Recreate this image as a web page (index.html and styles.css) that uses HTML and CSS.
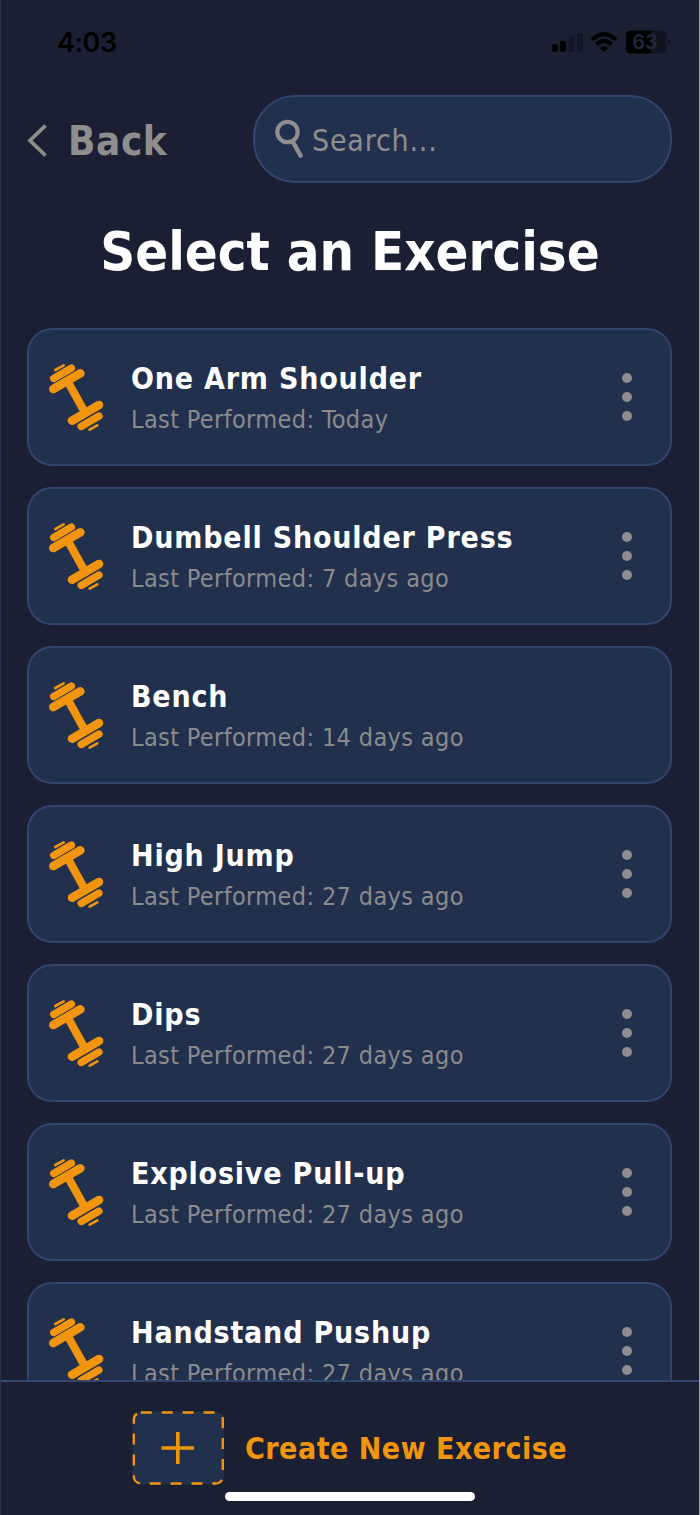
FILE: index.html
```html
<!DOCTYPE html>
<html lang="en">
<head>
    <meta charset="UTF-8">
    <meta name="viewport" content="width=device-width, initial-scale=1.0">
    <title>Select an Exercise</title>
    <link rel="stylesheet" href="styles.css">
</head>
<body>
    <!-- shared dumbbell icon -->
    <svg class="sprite" aria-hidden="true">
        <symbol id="dumbbell" viewBox="0 0 225 270">
            <g fill="none" stroke="currentColor" stroke-linecap="round">
                <path stroke-width="8" d="M46 60L71 46M149 239L172 226"/>
                <path stroke-width="22" d="M41 85.500L94.500 54M123.500 229.500L177 198"/>
                <path stroke-width="26" d="M40 117L121 70M96 212L177 165"/>
                <path stroke-width="24" stroke-linecap="butt" d="M84 96L134 186"/>
            </g>
        </symbol>
    </svg>

    <div class="screen">
        <div class="status-bar">
            <span class="time">4:03</span>
            <svg class="status-icons" width="122" height="26" viewBox="0 0 122 26">
                <rect x="3" y="15" width="6" height="8" rx="2"/>
                <rect x="11" y="12" width="6" height="11" rx="2"/>
                <rect x="19.500" y="7.500" width="6" height="15.500" rx="2" opacity=".3"/>
                <rect x="28" y="4" width="6" height="19" rx="2" opacity=".3"/>
                <g fill="none" stroke="#000" stroke-width="4">
                    <path d="M43 10.500Q55 0 67 10.500"/>
                    <path d="M47.500 15.200Q55 8.500 62.500 15.200"/>
                </g>
                <path d="M51 19Q55 15.500 59 19L55 23Z"/>
                <path d="M82 1.500H102V24.500H82Q77 24.500 77 19.500V6.500Q77 1.500 82 1.500Z"/>
                <path d="M102 1.500H112.500Q117.500 1.500 117.500 6.500V19.500Q117.500 24.500 112.500 24.500H102Z" opacity=".38"/>
                <path d="M119 10Q121.500 10.500 121.500 13T119 16Z" opacity=".4"/>
                <text class="battery-text" x="96" y="20" text-anchor="middle">63</text>
            </svg>
        </div>

        <header class="top-row">
            <a class="back" href="#">
                <svg width="22" height="36" viewBox="0 0 22 36"><path d="M18.500 2.500L3 17.500L18.500 32.500" fill="none" stroke="currentColor" stroke-width="3.800"/></svg>
                <span>Back</span>
            </a>
            <div class="search">
                <svg width="30" height="40" viewBox="0 0 30 40" fill="none" stroke="currentColor">
                    <circle cx="13.500" cy="13" r="10.200" stroke-width="4.200"/>
                    <path d="M19 23L26.500 36.500" stroke-width="4.600" stroke-linecap="round"/>
                </svg>
                <span class="placeholder">Search...</span>
            </div>
        </header>

        <h1>Select an Exercise</h1>

        <main class="exercise-list">
            <div class="card">
                <svg class="dumbbell"><use href="#dumbbell"/></svg>
                <div class="info">
                    <h2>One Arm Shoulder</h2>
                    <p>Last Performed: Today</p>
                </div>
                <div class="menu"><i></i><i></i><i></i></div>
            </div>
            <div class="card">
                <svg class="dumbbell"><use href="#dumbbell"/></svg>
                <div class="info">
                    <h2>Dumbell Shoulder Press</h2>
                    <p>Last Performed: 7 days ago</p>
                </div>
                <div class="menu"><i></i><i></i><i></i></div>
            </div>
            <div class="card">
                <svg class="dumbbell"><use href="#dumbbell"/></svg>
                <div class="info">
                    <h2>Bench</h2>
                    <p>Last Performed: 14 days ago</p>
                </div>
            </div>
            <div class="card">
                <svg class="dumbbell"><use href="#dumbbell"/></svg>
                <div class="info">
                    <h2>High Jump</h2>
                    <p>Last Performed: 27 days ago</p>
                </div>
                <div class="menu"><i></i><i></i><i></i></div>
            </div>
            <div class="card">
                <svg class="dumbbell"><use href="#dumbbell"/></svg>
                <div class="info">
                    <h2>Dips</h2>
                    <p>Last Performed: 27 days ago</p>
                </div>
                <div class="menu"><i></i><i></i><i></i></div>
            </div>
            <div class="card">
                <svg class="dumbbell"><use href="#dumbbell"/></svg>
                <div class="info">
                    <h2>Explosive Pull-up</h2>
                    <p>Last Performed: 27 days ago</p>
                </div>
                <div class="menu"><i></i><i></i><i></i></div>
            </div>
            <div class="card">
                <svg class="dumbbell"><use href="#dumbbell"/></svg>
                <div class="info">
                    <h2>Handstand Pushup</h2>
                    <p>Last Performed: 27 days ago</p>
                </div>
                <div class="menu"><i></i><i></i><i></i></div>
            </div>
        </main>

        <footer>
            <a class="create" href="#">
                <svg width="92" height="74" viewBox="0 0 92 74">
                    <rect class="create-box" x=".5" y=".5" width="91.500" height="73" rx="9"/>
                    <rect class="create-dash" x="1.800" y="1.500" width="89" height="71" rx="7"/>
                    <path class="create-plus" d="M29.500 37H62M45.800 21V53"/>
                </svg>
                <span>Create New Exercise</span>
            </a>
            <div class="home-indicator"></div>
        </footer>
    </div>
</body>
</html>
```
FILE: styles.css
```css
* {
    margin: 0;
    padding: 0;
    box-sizing: border-box;
}

body {
    background: #1a1f34;
    font-family: 'DejaVu Sans Condensed', 'DejaVu Sans', sans-serif;
    font-stretch: condensed;
    color: #fff;
}

a {
    color: inherit;
    text-decoration: none;
}

svg {
    display: block;
    flex-shrink: 0;
}

.sprite {
    display: none;
}

.screen {
    display: flex;
    flex-direction: column;
    height: 1515px;
    border-left: 1px solid #2f3447;
    border-right: 1px solid #a3a5ae;
    overflow: hidden;
}

/* Status bar */
.status-bar {
    display: flex;
    justify-content: space-between;
    align-items: center;
    height: 95px;
    padding: 0 28px 11px 56px;
    color: #000;
}

.time {
    font-family: 'Inter', sans-serif;
    font-size: 27px;
    font-weight: 600;
    letter-spacing: -0.5px;
}

.battery-text {
    font-family: 'Inter', sans-serif;
    font-size: 20px;
    font-weight: 600;
    fill: #20263c;
}

/* Back + search */
.top-row {
    display: flex;
    justify-content: space-between;
    height: 88px;
    padding: 0 27px 0 26px;
    color: #8e8e8e;
}

.back {
    display: flex;
    align-items: center;
    gap: 19px;
    padding-top: 3px;
    font-size: 40px;
    font-weight: bold;
    letter-spacing: 0.6px;
}

.search {
    display: flex;
    align-items: center;
    width: 419px;
    padding-left: 19px;
    background: #21304c;
    border: 2px solid #31456d;
    border-radius: 42px;
}

.placeholder {
    margin-left: 8px;
    padding-top: 3px;
    font-size: 30px;
    letter-spacing: 0.8px;
}

h1 {
    height: 145px;
    padding-top: 37px;
    text-align: center;
    font-size: 54px;
    line-height: 64px;
}

/* Exercise cards */
.exercise-list {
    flex: 1;
    display: flex;
    flex-direction: column;
    gap: 21px;
    min-height: 0;
    padding: 0 27px 0 26px;
    overflow: hidden;
}

.card {
    display: flex;
    align-items: center;
    flex-shrink: 0;
    height: 138px;
    padding: 0 38px 0 11px;
    background: #21304c;
    border: 2px solid #31456d;
    border-radius: 25px;
}

.dumbbell {
    width: 75px;
    height: 90px;
    margin-bottom: 4px;
    color: #f2950e;
}

.info {
    flex: 1;
    margin-left: 16px;
    padding-top: 4px;
}

.info h2 {
    font-size: 30px;
    line-height: 40px;
    letter-spacing: 0.8px;
}

.info p {
    color: #8b8b8b;
    font-size: 25px;
    line-height: 41px;
    letter-spacing: 0.37px;
}

.menu {
    display: flex;
    flex-direction: column;
    gap: 9px;
}

.menu i {
    width: 10px;
    height: 10px;
    background: #8e8e8e;
    border-radius: 50%;
}

/* Bottom bar */
footer {
    height: 135px;
    padding-top: 29px;
    border-top: 2px solid #31456d;
}

.create {
    display: flex;
    align-items: center;
    height: 74px;
    padding-left: 131px;
    gap: 21px;
    color: #f2950e;
    font-size: 30px;
    font-weight: bold;
    letter-spacing: 0.5px;
}

.create-box {
    fill: #21304c;
}

.create-dash {
    fill: none;
    stroke: currentColor;
    stroke-width: 2.4;
    stroke-dasharray: 11 9.9;
}

.create-plus {
    stroke: currentColor;
    stroke-width: 3.6;
}

.home-indicator {
    width: 250px;
    height: 9px;
    margin: 7px auto 0;
    background: #fff;
    border-radius: 5px;
}
```
